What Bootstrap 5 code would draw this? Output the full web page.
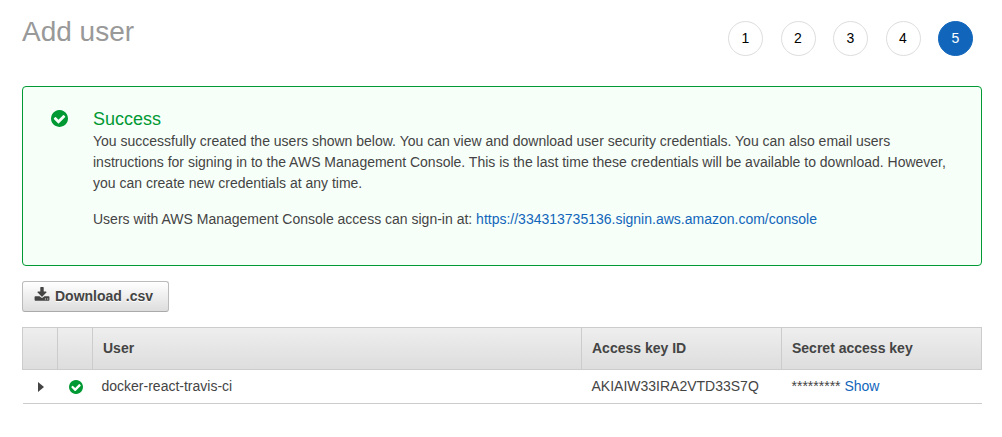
<!DOCTYPE html>
<html lang="en">
<head>
<meta charset="utf-8">
<meta name="viewport" content="width=device-width, initial-scale=1">
<title>Add user</title>
<link href="https://cdn.jsdelivr.net/npm/bootstrap@5.3.0/dist/css/bootstrap.min.css" rel="stylesheet">
<style>
  body { font-family: "Liberation Sans", Arial, sans-serif; font-size: 14px; line-height: 21px; color: #444; background: #fff; }
  a { color: #1166bb; text-decoration: none; }
  .page { padding: 14px 20px 24px 22px; }
  .page-header { margin-bottom: 30px; padding-right: 9px; }
  .page-title { font-size: 28px; line-height: 36px; color: #999; font-weight: 400; }
  .steps { width: 245px; margin-top: 7px; }
  .step { width: 35px; height: 35px; border: 1px solid #ddd; color: #000; background: #fff; }
  .step.active { background: #1166bb; border-color: #1166bb; color: #fff; }
  .notice { border: 1px solid #009933; border-radius: 4px; background: #f7fff9; padding: 21px 28px 35px; gap: 25px; margin-bottom: 15px; }
  .notice-icon { width: 17px; height: 17px; margin-top: 2px; fill: #009933; }
  .notice-title { font-size: 18px; line-height: 23px; color: #009933; font-weight: 400; }
  .notice p { margin-bottom: 15px; }
  .btn-download { font-size: 14px; line-height: 21px; font-weight: 700; color: #444; padding: 4px 15px 4px 11px; gap: 5px; border: 1px solid #bbb; border-bottom-color: #aaa; border-radius: 3px; background: linear-gradient(#fff, #ddd); text-shadow: 0 1px 0 #fff; margin-bottom: 15px; }
  .btn-download:hover { color: #444; border-color: #999; }
  .btn-download svg { margin-top: -3px; }
  .users { table-layout: fixed; border-collapse: collapse; width: 100%; }
  .users th { height: 42px; padding: 0 9px 0 10px; border: 1px solid #ccc; }
  .users thead { background: linear-gradient(#eee, #ddd); }
  .users td { height: 34px; padding: 0 9px 1px 10px; border-bottom: 1px solid #ccc; }
  .users .cell-user { padding-left: 9px; }
  .users .cell-icon { padding: 0 0 0 1px; }
  .col-mini { width: 35px; }
  .col-key { width: 200px; }
  .toggle { width: 14px; height: 14px; }
</style>
</head>
<body>
<svg class="d-none" aria-hidden="true">
  <symbol id="check" viewBox="0 0 1536 1536"><path d="M1284 606q0-28-18-46l-91-90q-19-19-45-19t-45 19L677 877 451 651q-19-19-45-19t-45 19l-91 90q-18 18-18 46 0 27 18 45l362 362q19 19 45 19 27 0 46-19l543-543q18-18 18-45zM1536 768q0 209-103 385.500T1153.500 1433 768 1536t-385.500-103T103 1153.500 0 768t103-385.500T382.500 103 768 0t385.500 103T1433 382.500 1536 768z"/></symbol>
</svg>
<main class="page container-fluid">
  <header class="page-header d-flex justify-content-between align-items-start">
    <h1 class="page-title mb-0">Add user</h1>
    <ol class="steps list-unstyled d-flex justify-content-between mb-0">
      <li class="step rounded-circle d-flex align-items-center justify-content-center">1</li>
      <li class="step rounded-circle d-flex align-items-center justify-content-center">2</li>
      <li class="step rounded-circle d-flex align-items-center justify-content-center">3</li>
      <li class="step rounded-circle d-flex align-items-center justify-content-center">4</li>
      <li class="step active rounded-circle d-flex align-items-center justify-content-center" aria-current="step">5</li>
    </ol>
  </header>

  <section class="notice d-flex align-items-start" role="status">
    <svg class="notice-icon flex-shrink-0" aria-hidden="true"><use href="#check"/></svg>
    <div>
      <h2 class="notice-title mb-0">Success</h2>
      <p>You successfully created the users shown below. You can view and download user security credentials. You can also email users instructions for signing in to the AWS Management Console. This is the last time these credentials will be available to download. However, you can create new credentials at any time.</p>
      <p class="mb-0">Users with AWS Management Console access can sign-in at: <a href="https://334313735136.signin.aws.amazon.com/console">https://334313735136.signin.aws.amazon.com/console</a></p>
    </div>
  </section>

  <button type="button" class="btn btn-download d-flex align-items-center">
    <svg width="16" height="16" viewBox="0 0 1792 1792" fill="currentColor" aria-hidden="true"><path d="M1344 1344q0-26-19-45t-45-19-45 19-19 45 19 45 45 19 45-19 19-45zm256 0q0-26-19-45t-45-19-45 19-19 45 19 45 45 19 45-19 19-45zm128-224v320q0 40-28 68t-68 28h-1472q-40 0-68-28t-28-68v-320q0-40 28-68t68-28h465l135 136q58 56 136 56t136-56l136-136h464q40 0 68 28t28 68zm-325-569q17 41-14 70l-448 448q-18 19-45 19t-45-19l-448-448q-31-29-14-70 17-39 59-39h256v-448q0-26 19-45t45-19h256q26 0 45 19t19 45v448h256q42 0 59 39z"/></svg>
    Download .csv
  </button>

  <table class="users">
    <colgroup><col class="col-mini"><col class="col-mini"><col><col class="col-key"><col class="col-key"></colgroup>
    <thead>
      <tr>
        <th></th>
        <th></th>
        <th scope="col">User</th>
        <th scope="col">Access key ID</th>
        <th scope="col">Secret access key</th>
      </tr>
    </thead>
    <tbody>
      <tr>
        <td class="cell-icon"><button type="button" class="toggle btn p-0 border-0 d-flex align-items-center justify-content-center mx-auto" aria-label="Expand docker-react-travis-ci"><svg width="6" height="10" viewBox="0 0 6 10" fill="#444" aria-hidden="true"><path d="M0 0l6 5-6 5z"/></svg></button></td>
        <td class="cell-icon"><svg class="d-block mx-auto" width="14" height="14" fill="#009933" role="img" aria-label="Created"><use href="#check"/></svg></td>
        <td class="cell-user">docker-react-travis-ci</td>
        <td>AKIAIW33IRA2VTD33S7Q</td>
        <td>********* <a href="#">Show</a></td>
      </tr>
    </tbody>
  </table>
</main>
<script src="https://cdn.jsdelivr.net/npm/bootstrap@5.3.0/dist/js/bootstrap.bundle.min.js"></script>
</body>
</html>
